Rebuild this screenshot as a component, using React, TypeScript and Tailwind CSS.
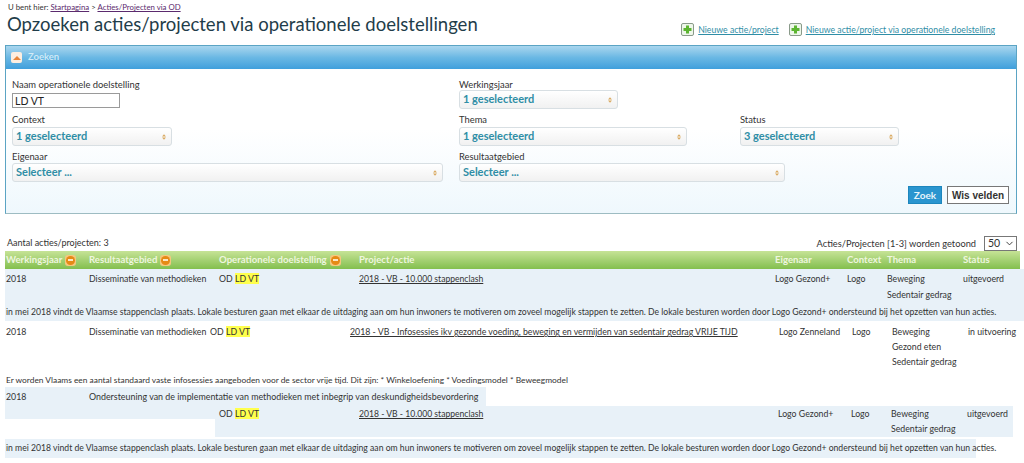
import { ChevronDown } from "lucide-react";

const tableCols = "grid-cols-[83px_130px_140px_416px_72px_40px_76px_1fr]";

function PlusIcon() {
  return (
    <span className="flex h-[13px] w-[13px] items-center justify-center rounded-[2px] border border-[#8a9a8a] bg-[#eef7ea]">
      <svg viewBox="0 0 9 9" className="h-[9px] w-[9px]">
        <path d="M3 0.5h3v2.5h2.5v3H6v2.5H3V6H0.5V3H3z" fill="#5cb531" />
      </svg>
    </span>
  );
}

function SortIcon() {
  return (
    <span className="ml-[3px] inline-flex h-[11px] w-[11px] items-center justify-center rounded-[3px] bg-[#f6c77e] align-middle">
      <span className="flex h-[9px] w-[9px] items-center justify-center rounded-full bg-[#e58a16]">
        <span className="h-[2px] w-[5px] bg-[#fbe6c4]" />
      </span>
    </span>
  );
}

function Field({ label, value, width, labelH }: { label: string; value: string; width: string; labelH: string }) {
  return (
    <div className="flex flex-col">
      <label className={`whitespace-nowrap text-[9.4px] leading-[14px] text-[#333] ${labelH}`}>{label}</label>
      <div className={`flex h-[19px] items-center justify-between rounded-[3px] border border-[#d8dfe3] bg-gradient-to-b from-white to-[#f1f1f1] pl-[3px] pr-[5px] ${width}`}>
        <span className="text-[11px] font-bold text-[#2f8ea6]">{value}</span>
        <svg viewBox="0 0 5 7" className="h-[6px] w-[4px]">
          <path d="M2.5 0L5 3H0zM2.5 7L0 4h5z" fill="#d9a960" />
        </svg>
      </div>
    </div>
  );
}

function Mark() {
  return <span className="bg-[#ffff4d]">LD VT</span>;
}

function Thema({ items, gap }: { items: string[]; gap: string }) {
  return (
    <div className={`flex flex-col ${gap}`}>
      {items.map((t) => (
        <span key={t} className="block h-[14px] leading-[14px]">{t}</span>
      ))}
    </div>
  );
}

function HeadCell({ children, sort }: { children: string; sort?: boolean }) {
  return (
    <span className="whitespace-nowrap">
      {children}
      {sort && <SortIcon />}
    </span>
  );
}

const clashText =
  "in mei 2018 vindt de Vlaamse stappenclash plaats. Lokale besturen gaan met elkaar de uitdaging aan om hun inwoners te motiveren om zoveel mogelijk stappen te zetten. De lokale besturen worden door Logo Gezond+ ondersteund bij het opzetten van hun acties.";

export default function App() {
  return (
    <div className="h-[463px] w-[1024px] overflow-hidden whitespace-nowrap bg-white font-['Lato',sans-serif] text-[8.75px] text-[#333]">
      <div className="flex items-start justify-between pl-[8px] pr-[29px]">
        <div>
          <div className="h-[13px] pt-[2px] text-[7.8px] leading-[11px]">
            U bent hier: <a className="text-[#5b2a6e] underline">Startpagina</a> &gt;{" "}
            <a className="text-[#5b2a6e] underline">Acties/Projecten via OD</a>
          </div>
          <h1 className="-ml-[1px] h-[32px] text-[18.5px] leading-[22px] text-[#1f3d4a]">
            Opzoeken acties/projecten via operationele doelstellingen
          </h1>
        </div>
        <div className="flex items-center pt-[23px] text-[8.7px] text-[#2f8ea6]">
          <PlusIcon />
          <a className="ml-[4px] underline">Nieuwe actie/project</a>
          <span className="ml-[10px]"><PlusIcon /></span>
          <a className="ml-[4px] underline">Nieuwe actie/project via operationele doelstelling</a>
        </div>
      </div>

      <section className="ml-[5px] h-[169px] w-[1012px] border border-[#5ba4c4] border-b-[#9dbcc2] bg-gradient-to-b from-white via-white to-[#eff8fd]">
        <div className="flex h-[23px] items-center bg-gradient-to-b from-[#a9d6ee] via-[#6ab8e4] to-[#3f9fdc] pl-[5px]">
          <span className="flex h-[11px] w-[11px] items-center justify-center rounded-[2px] bg-[#fdeee0]">
            <span className="h-0 w-0 border-x-[4px] border-b-[4px] border-x-transparent border-b-[#e8853a]" />
          </span>
          <span className="ml-[6px] text-[9.5px] font-semibold text-[#d5ecf7]">Zoeken</span>
        </div>

        <div className="px-[6px] pt-[9px]">
          <div className="flex h-[35px]">
            <div className="w-[447px]">
              <label className="block h-[15px] text-[9.4px] leading-[14px]">Naam operationele doelstelling</label>
              <input
                readOnly
                value="LD VT"
                className="block h-[15px] w-[108px] border border-[#9a9a9a] bg-white px-[2px] text-[10.5px] leading-[13px] text-[#222] outline-none"
              />
            </div>
            <Field label="Werkingsjaar" value="1 geselecteerd" width="w-[159px]" labelH="h-[12px]" />
          </div>
          <div className="flex h-[37px]">
            <div className="w-[447px]">
              <Field label="Context" value="1 geselecteerd" width="w-[160px]" labelH="h-[14px]" />
            </div>
            <div className="w-[281px]">
              <Field label="Thema" value="1 geselecteerd" width="w-[228px]" labelH="h-[14px]" />
            </div>
            <Field label="Status" value="3 geselecteerd" width="w-[159px]" labelH="h-[14px]" />
          </div>
          <div className="flex">
            <div className="w-[447px]">
              <Field label="Eigenaar" value="Selecteer ..." width="w-[431px]" labelH="h-[13px]" />
            </div>
            <Field label="Resultaatgebied" value="Selecteer ..." width="w-[326px]" labelH="h-[13px]" />
          </div>
          <div className="mt-[4px] flex justify-end gap-[5px] pr-[1px]">
            <button className="h-[18px] w-[34px] border border-[#1d86bd] bg-[#2a95cf] text-[10px] font-bold text-[#e6f4fb]">Zoek</button>
            <button className="h-[18px] w-[62px] border border-[#777] bg-white font-['Liberation_Sans',sans-serif] text-[10px] font-bold text-[#333]">Wis velden</button>
          </div>
        </div>
      </section>

      <div className="flex h-[37px] items-end justify-between pl-[7px] pr-[7px]">
        <span className="pb-[2px] text-[9px]">Aantal acties/projecten: 3</span>
        <div className="flex items-center gap-[8px]">
          <span className="text-[9.25px]">Acties/Projecten [1-3] worden getoond</span>
          <div className="flex h-[15px] w-[33px] items-center justify-between border border-[#777] pl-[3px] pr-[1px] text-[10.5px]">
            50 <ChevronDown size={11} strokeWidth={2} />
          </div>
        </div>
      </div>

      <div className={`ml-[5px] grid h-[18px] w-[1015px] items-center bg-gradient-to-b from-[#c6e396] to-[#83bf4d] pl-[1px] text-[9.6px] font-bold text-[#eef6df] ${tableCols}`}>
        <HeadCell sort>Werkingsjaar</HeadCell>
        <HeadCell sort>Resultaatgebied</HeadCell>
        <HeadCell sort>Operationele doelstelling</HeadCell>
        <HeadCell>Project/actie</HeadCell>
        <HeadCell>Eigenaar</HeadCell>
        <HeadCell>Context</HeadCell>
        <HeadCell>Thema</HeadCell>
        <HeadCell>Status</HeadCell>
      </div>

      {/* rij 1 */}
      <div className={`ml-[5px] grid h-[34px] w-[1019px] bg-[#e8f1f8] pl-[1px] pt-[3px] leading-[14px] ${tableCols}`}>
        <span>2018</span>
        <span>Disseminatie van methodieken</span>
        <span>OD <Mark /></span>
        <a className="text-[8.6px] underline">2018 - VB - 10.000 stappenclash</a>
        <span>Logo Gezond+</span>
        <span>Logo</span>
        <Thema items={["Beweging", "Sedentair gedrag"]} gap="gap-[2px]" />
        <span>uitgevoerd</span>
      </div>
      <div className="ml-[5px] flex h-[18px] items-center bg-[#e8f1f8] pl-[1px] pt-[1px] text-[8.64px]">{clashText}</div>

      {/* rij 2 */}
      <div className="ml-[5px] grid h-[52px] grid-cols-[83px_121px_140px_429px_73px_40px_76px_1fr] pl-[1px] pt-[4px] leading-[14px]">
        <span>2018</span>
        <span>Disseminatie van methodieken</span>
        <span>OD <Mark /></span>
        <a className="underline">2018 - VB - Infosessies ikv gezonde voeding, beweging en vermijden van sedentair gedrag VRIJE TIJD</a>
        <span>Logo Zenneland</span>
        <span>Logo</span>
        <Thema items={["Beweging", "Gezond eten", "Sedentair gedrag"]} gap="gap-[1px]" />
        <span>in uitvoering</span>
      </div>
      <div className="ml-[5px] flex h-[14px] items-center pl-[1px] text-[8.4px]">
        Er worden Vlaams een aantal standaard vaste infosessies aangeboden voor de sector vrije tijd. Dit zijn: * Winkeloefening * Voedingsmodel * Beweegmodel
      </div>

      {/* rij 3 */}
      <div className="ml-[5px] flex h-[19px] w-[481px] items-center bg-[#e8f1f8] pl-[1px]">
        <span className="w-[83px] shrink-0">2018</span>
        <span className="text-[8.9px]">Ondersteuning van de implementatie van methodieken met inbegrip van deskundigheidsbevordering</span>
      </div>
      <div className="ml-[5px] flex">
        <div className="h-[13px] w-[210px] bg-[#e8f1f8]" />
        <div className="grid h-[31px] w-[798px] grid-cols-[140px_419px_73px_40px_76px_1fr] bg-[#e8f1f8] pl-[4px] pt-[1px] leading-[14px]">
          <span>OD <Mark /></span>
          <a className="text-[8.6px] underline">2018 - VB - 10.000 stappenclash</a>
          <span>Logo Gezond+</span>
          <span>Logo</span>
          <Thema items={["Beweging", "Sedentair gedrag"]} gap="gap-[1px]" />
          <span>uitgevoerd</span>
        </div>
      </div>
      <div className="ml-[5px] mt-[2px] flex h-[19px] w-[971px] items-center bg-[#e8f1f8] pl-[1px] text-[8.64px]">{clashText}</div>
    </div>
  );
}
